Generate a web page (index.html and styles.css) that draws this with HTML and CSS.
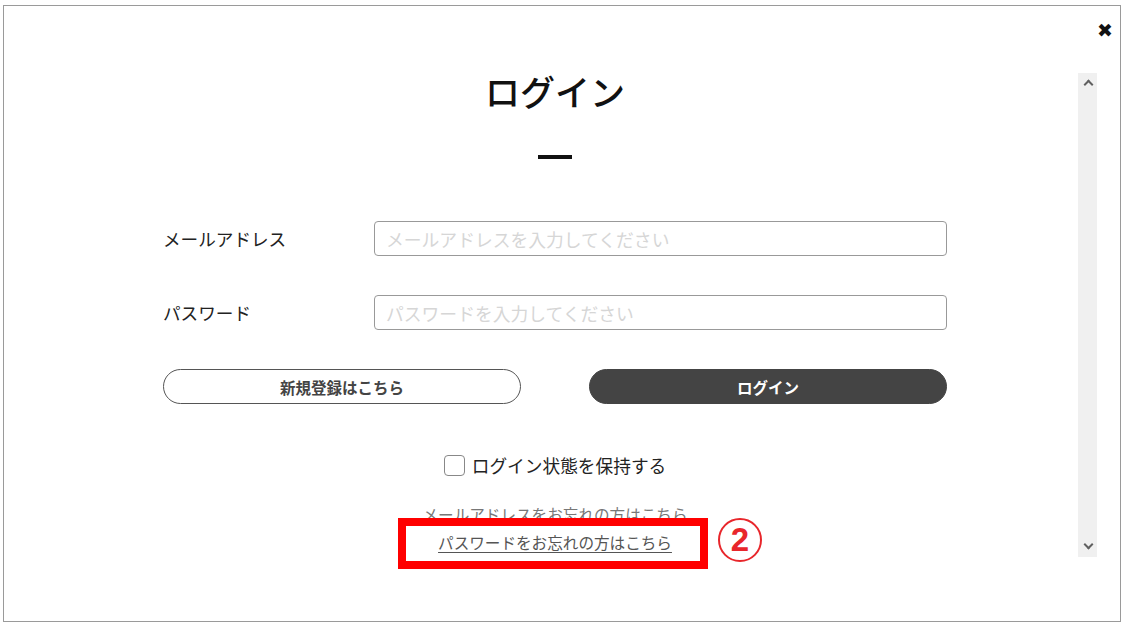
FILE: index.html
```html
<!DOCTYPE html>
<html lang="ja">
<head>
    <meta charset="UTF-8">
    <meta name="viewport" content="width=device-width, initial-scale=1.0">
    <title>ログイン</title>
    <link rel="stylesheet" href="styles.css">
</head>
<body>

    <div class="frame">
        <button class="close" type="button">&#x2716;</button>

        <div class="main">
            <div class="form">
                <h1 class="title">ログイン</h1>
                <div class="dash"></div>

                <div class="field">
                    <label class="label" for="email">メールアドレス</label>
                    <input class="input" id="email" type="text" placeholder="メールアドレスを入力してください">
                </div>

                <div class="field">
                    <label class="label" for="password">パスワード</label>
                    <input class="input" id="password" type="password" placeholder="パスワードを入力してください">
                </div>

                <div class="buttons">
                    <button class="btn btn-outline" type="button">新規登録はこちら</button>
                    <button class="btn btn-dark" type="button">ログイン</button>
                </div>

                <label class="remember">
                    <span class="checkbox"></span>
                    <span>ログイン状態を保持する</span>
                </label>

                <div class="forgot forgot-mail">
                    <a href="#">メールアドレスをお忘れの方はこちら</a>
                </div>

                <div class="forgot forgot-pass">
                    <a href="#">パスワードをお忘れの方はこちら</a>
                    <!-- 注釈の赤枠と番号 -->
                    <span class="mark-box"></span>
                    <span class="mark-num">2</span>
                </div>
            </div>
        </div>

        <div class="scrollbar">
            <span class="arrow arrow-up"></span>
            <span class="arrow arrow-down"></span>
        </div>
    </div>

</body>
</html>
```

FILE: styles.css
```css
body {
    font-family: 'Noto Sans CJK JP', 'Noto Sans', sans-serif;
    background-color: #fff;
    color: #222;
    margin: 0;
    padding: 5px 9px 6px 3px;
}

.frame {
    position: relative;
    display: flex;
    height: 615px;
    border: 1px solid #9a9a9a;
}

.close {
    position: absolute;
    top: 13px;
    right: 7px;
    background: none;
    border: none;
    padding: 0;
    font-family: 'DejaVu Sans', sans-serif;
    font-size: 19px;
    line-height: 22px;
    color: #111;
    cursor: pointer;
}

.main {
    flex: 1;
    padding-left: 159px;
}

.form {
    width: 784px;
    padding-top: 60px;
}

.title {
    margin: 0;
    height: 50px;
    line-height: 50px;
    text-align: center;
    font-size: 35px;
    font-weight: 500;
    color: #111;
}

.dash {
    width: 34px;
    height: 4px;
    margin: 39px auto 0;
    background-color: #111;
}

.field {
    display: flex;
    align-items: center;
    margin-top: 39px;
}

.dash + .field {
    margin-top: 62px;
}

.label {
    width: 211px;
    font-size: 17.6px;
    color: #222;
}

.input {
    width: 573px;
    height: 35px;
    box-sizing: border-box;
    border: 1px solid #999;
    border-radius: 4px;
    padding: 0 11px;
    font-family: inherit;
    font-size: 17.8px;
    color: #222;
}

.input::placeholder {
    color: #d6d6d6;
}

.buttons {
    display: flex;
    justify-content: space-between;
    margin-top: 39px;
}

.btn {
    width: 358px;
    height: 35px;
    border-radius: 18px;
    font-family: inherit;
    font-size: 15.5px;
    font-weight: bold;
    cursor: pointer;
}

.btn-outline {
    background-color: #fff;
    border: 1px solid #555;
    color: #444;
}

.btn-dark {
    background-color: #444;
    border: 1px solid #444;
    color: #fff;
}

.remember {
    display: flex;
    justify-content: center;
    align-items: center;
    gap: 7px;
    height: 24px;
    margin-top: 49px;
    font-size: 17.7px;
    color: #222;
}

.checkbox {
    width: 19px;
    height: 19px;
    border: 1.5px solid #888;
    border-radius: 4px;
}

.forgot {
    height: 24px;
    line-height: 24px;
    text-align: center;
    font-size: 15.6px;
}

.forgot-mail {
    margin-top: 25px;
}

.forgot-mail a {
    color: #777;
    text-decoration: none;
}

.forgot-pass {
    position: relative;
    margin-top: 4px;
}

.forgot-pass a {
    color: #555;
    text-decoration: underline;
    text-underline-offset: 3px;
}

.mark-box {
    position: absolute;
    left: 235px;
    top: -12px;
    width: 310px;
    height: 51px;
    box-sizing: border-box;
    border: 8px solid #ff0000;
}

.mark-num {
    position: absolute;
    left: 555px;
    top: -12px;
    width: 44px;
    height: 44px;
    box-sizing: border-box;
    border: 2px solid #e8262b;
    border-radius: 50%;
    line-height: 40px;
    text-align: center;
    font-family: 'Liberation Sans', sans-serif;
    font-size: 33px;
    font-weight: bold;
    color: #e8262b;
}

.scrollbar {
    position: relative;
    width: 19px;
    height: 484px;
    margin: 67px 23px 0 0;
    background-color: #f0f0f0;
}

.arrow {
    position: absolute;
    left: 7px;
    width: 5px;
    height: 5px;
    border-left: 2px solid #606060;
    border-top: 2px solid #606060;
}

.arrow-up {
    top: 8px;
    transform: rotate(45deg);
}

.arrow-down {
    bottom: 9px;
    transform: rotate(225deg);
}
```
